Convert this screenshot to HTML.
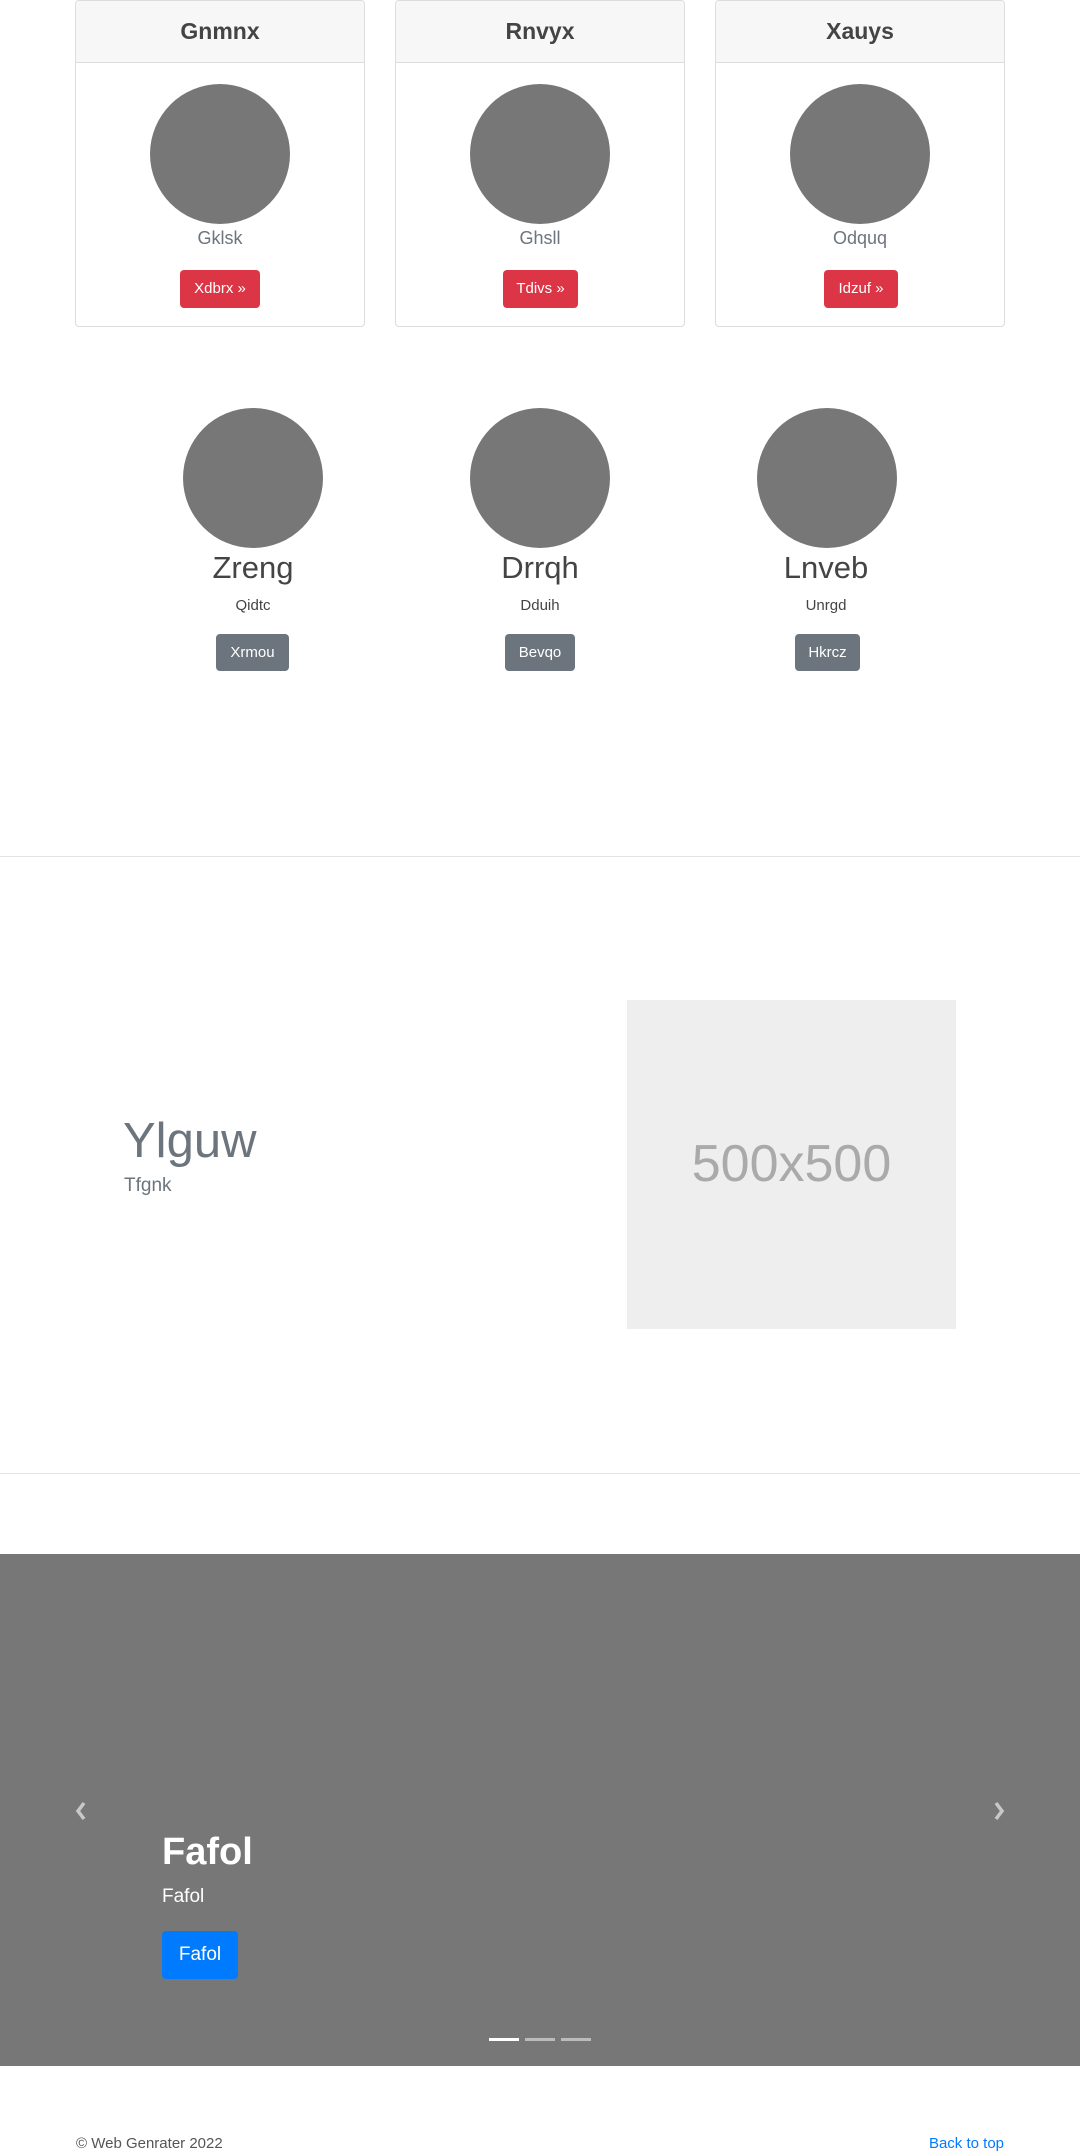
<!DOCTYPE html>
<html><head><meta charset="utf-8"><style>
*{box-sizing:border-box;margin:0;padding:0}
body{width:1080px;height:2155px;position:relative;background:#fff;font-family:"Liberation Sans",sans-serif;color:#212529;overflow:hidden}
.a{position:absolute}
.card{position:absolute;top:0;width:290px;height:327px;border:1px solid #dcdcdc;border-radius:4px;overflow:hidden}
.card .h{height:62px;background:#f7f7f7;border-bottom:1px solid #dcdcdc;text-align:center;line-height:60px;font-size:23px;font-weight:600;color:#444}
.circ{position:absolute;width:140px;height:140px;border-radius:50%;background:#777}
.card .circ{left:74px;top:83px}
.card .s{position:absolute;top:227px;width:100%;text-align:center;font-size:18px;color:#6c757d}
.btnr{position:absolute;top:269px;height:38px;background:#dc3545;color:#fff;border-radius:4px;font-size:15px;line-height:38px;text-align:center}
.ctr{text-align:center;position:absolute;width:200px}
.btng{position:absolute;top:634px;height:37px;background:#6c757d;color:#fff;border-radius:4px;font-size:15px;line-height:37px;text-align:center}
hr{position:absolute;left:0;width:1080px;border:0;border-top:1px solid #e3e3e3}
</style></head><body>
<div class="card" style="left:75px"><div class="h">Gnmnx</div><div class="circ"></div><div class="s">Gklsk</div><div class="btnr" style="left:104px;width:80px">Xdbrx »</div></div>
<div class="card" style="left:395px"><div class="h">Rnvyx</div><div class="circ"></div><div class="s">Ghsll</div><div class="btnr" style="left:107px;width:75px">Tdivs »</div></div>
<div class="card" style="left:715px"><div class="h">Xauys</div><div class="circ"></div><div class="s">Odquq</div><div class="btnr" style="left:108px;width:74px">Idzuf »</div></div>

<div class="circ" style="left:183px;top:408px"></div>
<div class="circ" style="left:470px;top:408px"></div>
<div class="circ" style="left:757px;top:408px"></div>
<div class="ctr" style="left:153px;top:550px;font-size:31px;color:#444">Zreng</div>
<div class="ctr" style="left:440px;top:550px;font-size:31px;color:#444">Drrqh</div>
<div class="ctr" style="left:726px;top:550px;font-size:31px;color:#444">Lnveb</div>
<div class="ctr" style="left:153px;top:597px;font-size:15px;color:#444">Qidtc</div>
<div class="ctr" style="left:440px;top:597px;font-size:15px;color:#444">Dduih</div>
<div class="ctr" style="left:726px;top:597px;font-size:15px;color:#444">Unrgd</div>
<div class="btng" style="left:216px;width:73px">Xrmou</div>
<div class="btng" style="left:505px;width:70px">Bevqo</div>
<div class="btng" style="left:795px;width:65px">Hkrcz</div>

<hr style="top:856px">
<div class="a" style="left:123px;top:1113px;font-size:49px;color:#6c757d">Ylguw</div>
<div class="a" style="left:124px;top:1175px;font-size:19px;color:#6c757d">Tfgnk</div>
<div class="a" style="left:627px;top:1000px;width:329px;height:329px;background:#eee;color:#aaa;font-size:52px;text-align:center;line-height:329px">500x500</div>
<hr style="top:1473px">

<div class="a" style="left:0;top:1554px;width:1080px;height:512px;background:#777"></div>
<svg class="a" style="left:74px;top:1801px" width="14" height="20" viewBox="0 0 14 20"><path d="M10 2 L4 10 L10 18" stroke="#c8c8c8" stroke-width="3.5" fill="none"/></svg>
<svg class="a" style="left:992px;top:1801px" width="14" height="20" viewBox="0 0 14 20"><path d="M4 2 L10 10 L4 18" stroke="#c8c8c8" stroke-width="3.5" fill="none"/></svg>
<div class="a" style="left:162px;top:1831px;font-size:38px;font-weight:bold;color:#fff">Fafol</div>
<div class="a" style="left:162px;top:1886px;font-size:19px;color:#fff">Fafol</div>
<div class="a" style="left:162px;top:1931px;width:76px;height:48px;background:#007bff;border-radius:4px;color:#fff;font-size:19px;line-height:48px;text-align:center">Fafol</div>
<div class="a" style="left:489px;top:2038px;width:30px;height:3px;background:#fff"></div>
<div class="a" style="left:525px;top:2038px;width:30px;height:3px;background:#bbb"></div>
<div class="a" style="left:561px;top:2038px;width:30px;height:3px;background:#bbb"></div>

<div class="a" style="left:76px;top:2135px;font-size:15px;color:#555">© Web Genrater 2022</div>
<div class="a" style="left:884px;top:2135px;width:120px;text-align:right;font-size:15px;color:#007bff">Back to top</div>
</body></html>
